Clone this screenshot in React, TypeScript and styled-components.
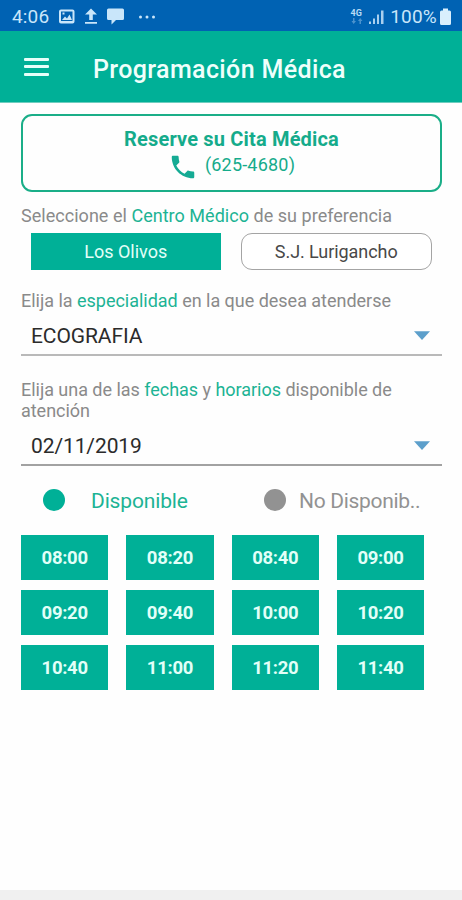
import React from "react";
import styled, { createGlobalStyle } from "styled-components";

const GREEN = "#00b097";

const GlobalStyle = createGlobalStyle`
  * { box-sizing: border-box; }
  body { margin: 0; background: #fefefe; font-family: Roboto, sans-serif; }
  button { font-family: inherit; padding: 0; margin: 0; }
`;

const Screen = styled.div`
  width: 462px;
  height: 900px;
  display: flex;
  flex-direction: column;
  overflow: hidden;
  background: #fefefe;
`;

const StatusBar = styled.div`
  height: 31px;
  flex: none;
  display: flex;
  align-items: center;
  justify-content: space-between;
  padding: 2px 11px 0 12px;
  background: #0062b3;
  color: #c9e6fa;
`;

const StatusGroup = styled.div`
  display: flex;
  align-items: center;
`;

const StatusText = styled.span<{ $spacing: number }>`
  font-size: 19px;
  line-height: 22px;
  letter-spacing: ${(p) => p.$spacing}px;
`;

const Header = styled.header`
  height: 72px;
  flex: none;
  display: flex;
  align-items: center;
  padding: 1px 24px 0;
  background: ${GREEN};
  border-bottom: 1px solid #6fcdbf;
`;

const MenuButton = styled.button`
  width: 25px;
  height: 19px;
  border: 0;
  background: none;
  display: flex;
  flex-direction: column;
  justify-content: space-between;
  padding: 0 0 1px;
`;

const MenuLine = styled.span`
  height: 3px;
  border-radius: 1px;
  background: #e6fff9;
`;

const Title = styled.h1`
  margin: 6px 0 0 44px;
  font-size: 25px;
  line-height: 30px;
  font-weight: 500;
  letter-spacing: 0.37px;
  color: #effffb;
`;

const Content = styled.main`
  flex: 1;
  padding: 11px 20px 0 21px;
`;

const CallCard = styled.section`
  height: 78px;
  border: 2px solid #1aae88;
  border-radius: 11px;
  display: flex;
  flex-direction: column;
  align-items: center;
  padding-top: 11px;
  color: #15ab8b;
`;

const CallTitle = styled.h2`
  margin: 0;
  font-size: 20px;
  line-height: 24px;
  font-weight: 700;
  letter-spacing: 0.17px;
`;

const Phone = styled.div`
  display: flex;
  align-items: center;
  gap: 7px;
  height: 28px;
  font-size: 18px;
  letter-spacing: 0.2px;
  span { padding-bottom: 2px; }
  svg { margin-top: 3px; }
`;

const Label = styled.p<{ $top: number; $spacing: number }>`
  margin: ${(p) => p.$top}px 0 0;
  font-size: 18px;
  line-height: 21px;
  white-space: nowrap;
  letter-spacing: ${(p) => p.$spacing}px;
  color: #8a8a8a;
`;

const Accent = styled.span`
  color: #1cb394;
`;

const Centers = styled.div`
  display: flex;
  gap: 20px;
  margin: 7px 10px 0;
`;

const CenterButton = styled.button<{ $selected?: boolean }>`
  flex: 1;
  height: 37px;
  font-size: 18px;
  letter-spacing: ${(p) => (p.$selected ? 0 : -0.06)}px;
  border: ${(p) => (p.$selected ? "0" : "1.5px solid #a4a4a4")};
  border-radius: ${(p) => (p.$selected ? "0" : "11px")};
  background: ${(p) => (p.$selected ? GREEN : "#fff")};
  color: ${(p) => (p.$selected ? "#e2fff8" : "#484848")};
`;

const Select = styled.div<{ $line: string; $spacing: number }>`
  height: 45px;
  display: flex;
  align-items: center;
  justify-content: space-between;
  padding: 6px 12px 0 10px;
  border-bottom: 2px solid ${(p) => p.$line};
  font-size: 21px;
  letter-spacing: ${(p) => p.$spacing}px;
  color: #2b2b2b;
`;

const Legend = styled.div`
  display: flex;
  align-items: center;
  height: 24px;
  margin-top: 23px;
  padding-left: 22px;
`;

const Dot = styled.span<{ $color: string }>`
  width: 22px;
  height: 22px;
  margin-bottom: 2px;
  border-radius: 50%;
  background: ${(p) => p.$color};
`;

const LegendText = styled.span<{ $color: string; $width: number; $gap: number; $spacing: number }>`
  width: ${(p) => p.$width}px;
  margin-left: ${(p) => p.$gap}px;
  white-space: nowrap;
  font-size: 21px;
  line-height: 24px;
  letter-spacing: ${(p) => p.$spacing}px;
  color: ${(p) => p.$color};
`;

const Slots = styled.div`
  display: grid;
  grid-template-columns: repeat(4, 87.3px);
  grid-auto-rows: 45px;
  gap: 10.3px 18px;
  margin-top: 21.5px;
`;

const Slot = styled.button`
  border: 0;
  padding-top: 1px;
  background: ${GREEN};
  color: #e2fff8;
  font-size: 18.5px;
  font-weight: 700;
  letter-spacing: -0.3px;
`;

const NavStrip = styled.div`
  height: 10px;
  flex: none;
  background: #f0f0f0;
`;

const Arrow = () => (
  <svg width="16" height="9" viewBox="0 0 16 9">
    <path d="M0 .2h16L8 9z" fill="#5c9fcb" />
  </svg>
);

const slots = [
  "08:00", "08:20", "08:40", "09:00",
  "09:20", "09:40", "10:00", "10:20",
  "10:40", "11:00", "11:20", "11:40",
];

export default function App() {
  return (
    <>
      <GlobalStyle />
      <Screen>
        <StatusBar>
          <StatusGroup>
            <StatusText $spacing={0.15}>4:06</StatusText>
            <svg width="89" height="18" viewBox="0 0 89 18" fill="#c9e6fa">
              <path fillRule="evenodd" d="M12 1.500h11.500a2 2 0 0 1 2 2v10a2 2 0 0 1-2 2H12a2 2 0 0 1-2-2v-10a2 2 0 0 1 2-2zm0 2V13h11.500V3.500zm1 8.500 3-3.500 2 2 2.500-4L23 12zm.5-7.500h2v2h-2z" />
              <path d="M42 .5 48 6.500h-4.200v5.500h-3.600V6.500H36zM36 14h12v1.800H36z" />
              <path d="M59.500.500h14a1.500 1.500 0 0 1 1.500 1.500v8.500a1.500 1.500 0 0 1-1.500 1.500H67l-4.500 4.500V12h-3a1.500 1.500 0 0 1-1.500-1.500V2A1.500 1.500 0 0 1 59.500.500z" />
            </svg>
            <svg width="20" height="4" viewBox="0 0 20 4" fill="#c9e6fa">
              <circle cx="2.500" cy="2" r="1.500" />
              <circle cx="9" cy="2" r="1.500" />
              <circle cx="15.500" cy="2" r="1.500" />
            </svg>
          </StatusGroup>
          <StatusGroup>
            <svg width="40" height="18" viewBox="0 0 40 18" fill="#a9cfee">
              <text x="0.500" y="7.500" fontSize="9" fontWeight="700" fontFamily="Roboto, sans-serif" fill="#b9dcf5">4G</text>
              <path d="M3 10h1.500v3H6l-2.300 3L1.500 13H3zM8 13l2.200-3 2.300 3H11v3H9.500v-3z" opacity=".45" />
              <path d="M19 13.500h2V16h-2zM23 10.500h2V16h-2zM27 6.500h2V16h-2zM31 2.500h2.500V16H31z" />
            </svg>
            <StatusText $spacing={0.2}>100%</StatusText>
            <svg width="14" height="18" viewBox="0 0 14 18" fill="#d9effd">
              <path d="M6 .5h5V2.500h1.500A1.500 1.500 0 0 1 14 4v11.500a1.500 1.500 0 0 1-1.500 1.500h-8A1.500 1.500 0 0 1 3 15.500V4a1.500 1.500 0 0 1 1.500-1.500H6z" />
            </svg>
          </StatusGroup>
        </StatusBar>
        <Header>
          <MenuButton aria-label="Menú">
            <MenuLine />
            <MenuLine />
            <MenuLine />
          </MenuButton>
          <Title>Programación Médica</Title>
        </Header>
        <Content>
          <CallCard>
            <CallTitle>Reserve su Cita Médica</CallTitle>
            <Phone>
              <svg width="30" height="30" viewBox="0 0 24 24" fill="#15ab94">
                <path d="M6.620 10.790c1.440 2.830 3.760 5.140 6.590 6.590l2.200-2.200c.27-.27.67-.36 1.020-.24 1.120.37 2.330.57 3.570.57.550 0 1 .45 1 1V20c0 .55-.45 1-1 1-9.390 0-17-7.610-17-17 0-.55.45-1 1-1h3.500c.55 0 1 .45 1 1 0 1.250.2 2.450.57 3.570.11.35.03.74-.25 1.020z" />
              </svg>
              <span>(625-4680)</span>
            </Phone>
          </CallCard>
          <Label $top={13} $spacing={0.03}>
            Seleccione el <Accent>Centro Médico</Accent> de su preferencia
          </Label>
          <Centers>
            <CenterButton $selected>Los Olivos</CenterButton>
            <CenterButton>S.J. Lurigancho</CenterButton>
          </Centers>
          <Label $top={20} $spacing={-0.02}>
            Elija la <Accent>especialidad</Accent> en la que desea atenderse
          </Label>
          <Select $line="#b9b9b9" $spacing={-0.1}>
            ECOGRAFIA
            <Arrow />
          </Select>
          <Label $top={23} $spacing={-0.03}>
            Elija una de las <Accent>fechas</Accent> y <Accent>horarios</Accent> disponible de
            <br />
            atención
          </Label>
          <Select $line="#a2a2a2" $spacing={-0.1}>
            02/11/2019
            <Arrow />
          </Select>
          <Legend>
            <Dot $color={GREEN} />
            <LegendText $color="#1cb394" $gap={26} $width={173} $spacing={-0.15}>Disponible</LegendText>
            <Dot $color="#929292" />
            <LegendText $color="#929292" $gap={13} $width={130} $spacing={-0.3}>No Disponib..</LegendText>
          </Legend>
          <Slots>
            {slots.map((time) => (
              <Slot key={time}>{time}</Slot>
            ))}
          </Slots>
        </Content>
        <NavStrip />
      </Screen>
    </>
  );
}
